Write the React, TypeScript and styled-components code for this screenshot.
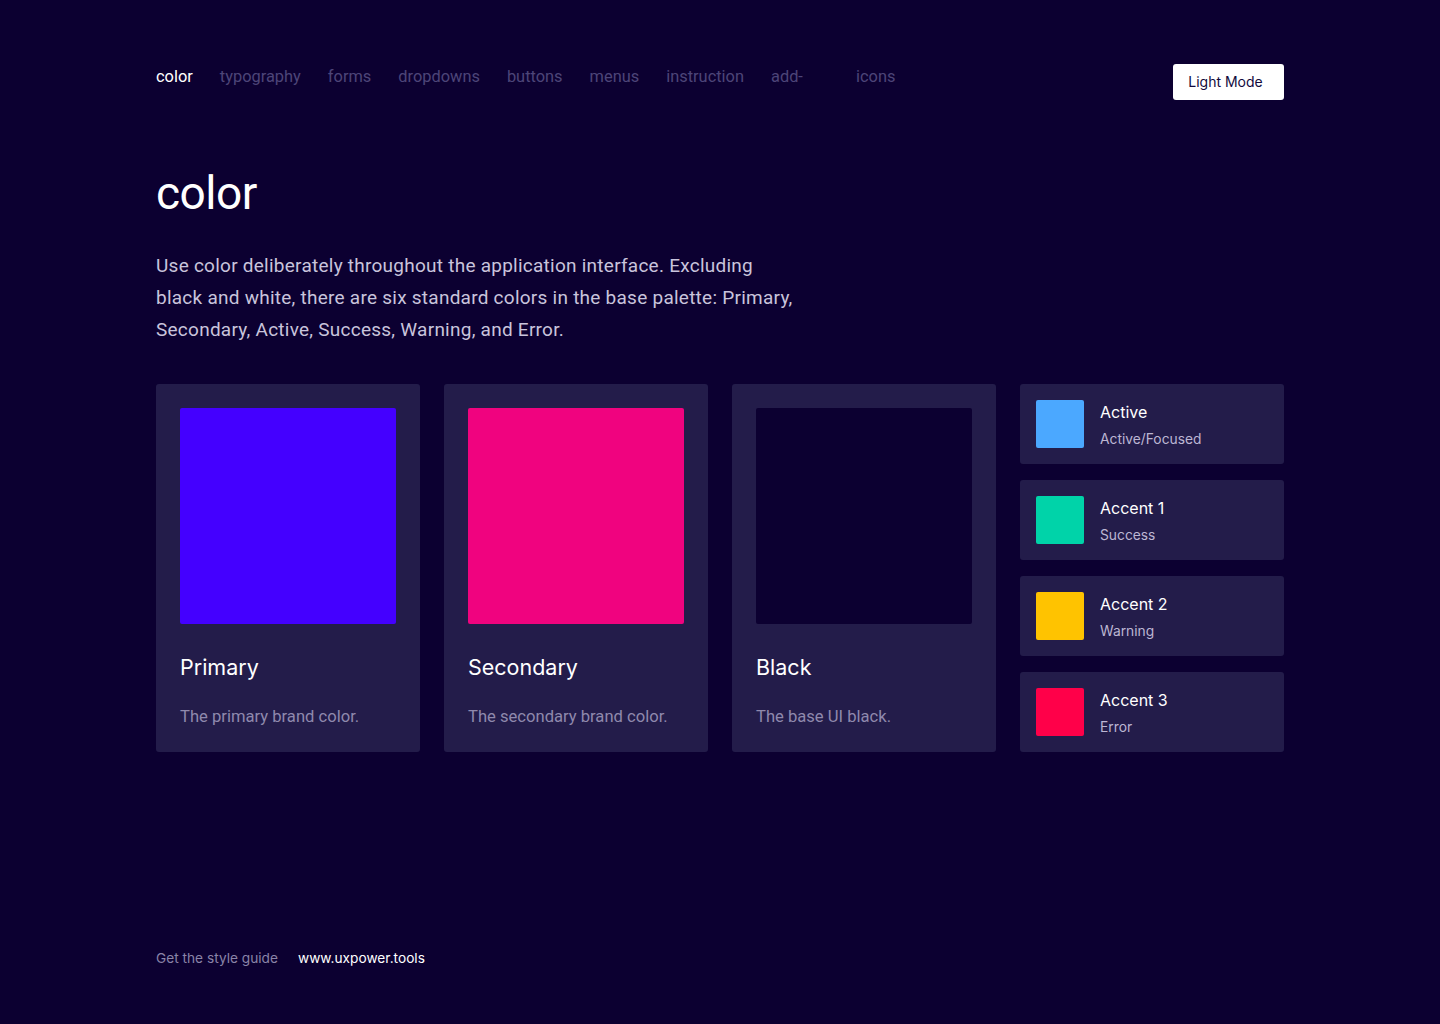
import React from "react";
import styled, { createGlobalStyle } from "styled-components";

const Global = createGlobalStyle`
  html, body { margin: 0; padding: 0; background: #0c0031; }
  body { font-family: Roboto, "Liberation Sans", sans-serif; -webkit-font-smoothing: antialiased; }
  * { box-sizing: border-box; }
`;

const Page = styled.div`
  width: 1440px;
  min-height: 1024px;
  background: #0c0031;
  padding: 64px 156px 0;
  display: flex;
  flex-direction: column;
`;

const TopBar = styled.header`
  display: flex;
  justify-content: space-between;
  align-items: flex-start;
  height: 36px;
`;

const Nav = styled.nav`
  display: flex;
  align-items: center;
  height: 24px;
  margin-top: 1px;
`;

const NavItem = styled.a<{ $active?: boolean; $w?: number }>`
  font-family: Roboto, "Liberation Sans", sans-serif;
  font-size: 16.4px;
  line-height: 24px;
  color: ${(p) => (p.$active ? "#ffffff" : "#4d4578")};
  text-decoration: none;
  margin-right: 27px;
  ${(p) => (p.$w ? `width: ${p.$w}px;` : "")}
  white-space: nowrap;
`;

const ModeButton = styled.button`
  width: 111px;
  height: 36px;
  background: #ffffff;
  border: none;
  border-radius: 3px;
  color: #120a3d;
  font-family: Inter, "Liberation Sans", sans-serif;
  font-size: 14px;
  padding: 0 6px 2px 0;
  text-align: center;
`;

const Title = styled.h1`
  margin: 65px 0 0;
  font-family: Roboto, "Liberation Sans", sans-serif;
  font-weight: 400;
  font-size: 46px;
  line-height: 56px;
  color: #ffffff;
  letter-spacing: -0.5px;
`;

const Lead = styled.p`
  margin: 29px 0 0;
  width: 642px;
  font-family: Roboto, "Liberation Sans", sans-serif;
  font-size: 19px;
  letter-spacing: 0.25px;
  line-height: 32px;
  color: #c9c4dc;
`;

const Grid = styled.section`
  margin-top: 38px;
  display: grid;
  grid-template-columns: repeat(4, 264px);
  gap: 24px;
`;

const Card = styled.div`
  background: #231c4a;
  border-radius: 3px;
  padding: 24px 24px 0;
  height: 368px;
  display: flex;
  flex-direction: column;
`;

const BigSwatch = styled.div<{ $c: string }>`
  width: 216px;
  height: 216px;
  border-radius: 2px;
  background: ${(p) => p.$c};
`;

const CardTitle = styled.div`
  margin-top: 29px;
  font-family: Inter, "Liberation Sans", sans-serif;
  font-size: 21.5px;
  line-height: 28px;
  color: #ffffff;
`;

const CardDesc = styled.div`
  margin-top: 24px;
  font-family: Roboto, "Liberation Sans", sans-serif;
  font-size: 16.6px;
  line-height: 24px;
  color: #8f89ad;
`;

const Stack = styled.div`
  display: flex;
  flex-direction: column;
  gap: 16px;
`;

const SmallCard = styled.div`
  background: #231c4a;
  border-radius: 3px;
  height: 80px;
  padding: 16px;
  display: flex;
  align-items: center;
  gap: 16px;
`;

const SmallSwatch = styled.div<{ $c: string }>`
  width: 48px;
  height: 48px;
  border-radius: 2px;
  background: ${(p) => p.$c};
  flex: none;
`;

const SmallText = styled.div`
  display: flex;
  flex-direction: column;
  margin-top: 0;
`;

const SmallTitle = styled.div`
  font-family: Inter, "Liberation Sans", sans-serif;
  font-size: 16px;
  line-height: 20px;
  color: #ffffff;
`;

const SmallSub = styled.div`
  margin-top: 9px;
  font-family: Inter, "Liberation Sans", sans-serif;
  font-size: 13.8px;
  line-height: 16px;
  color: #bcb6d3;
`;

const Footer = styled.footer`
  margin-top: 196px;
  display: flex;
  gap: 20px;
  font-family: Inter, "Liberation Sans", sans-serif;
  font-size: 13.7px;
  line-height: 20px;
`;

const FooterLabel = styled.span`
  color: #8a84a8;
`;

const FooterLink = styled.a`
  color: #ffffff;
  text-decoration: none;
`;

const navItems = [
  "color",
  "typography",
  "forms",
  "dropdowns",
  "buttons",
  "menus",
  "instruction",
  "add-",
  "icons",
];

const bigCards = [
  { name: "Primary", color: "#4400ff", desc: "The primary brand color." },
  { name: "Secondary", color: "#f0037f", desc: "The secondary brand color." },
  { name: "Black", color: "#0c0031", desc: "The base UI black." },
];

const smallCards = [
  { name: "Active", sub: "Active/Focused", color: "#4ba8ff" },
  { name: "Accent 1", sub: "Success", color: "#00d3a9" },
  { name: "Accent 2", sub: "Warning", color: "#ffc300" },
  { name: "Accent 3", sub: "Error", color: "#ff0049" },
];

export default function App() {
  return (
    <>
      <Global />
      <Page>
        <TopBar>
          <Nav>
            {navItems.map((n, i) => (
              <NavItem
                key={n}
                $active={i === 0}
                $w={n === "add-" ? 58 : undefined}
                href="#"
              >
                {n}
              </NavItem>
            ))}
          </Nav>
          <ModeButton>Light Mode</ModeButton>
        </TopBar>
        <Title>color</Title>
        <Lead>
          Use color deliberately throughout the application interface. Excluding
          black and white, there are six standard colors in the base palette:
          Primary, Secondary, Active, Success, Warning, and Error.
        </Lead>
        <Grid>
          {bigCards.map((c) => (
            <Card key={c.name}>
              <BigSwatch $c={c.color} />
              <CardTitle>{c.name}</CardTitle>
              <CardDesc>{c.desc}</CardDesc>
            </Card>
          ))}
          <Stack>
            {smallCards.map((c) => (
              <SmallCard key={c.name}>
                <SmallSwatch $c={c.color} />
                <SmallText>
                  <SmallTitle>{c.name}</SmallTitle>
                  <SmallSub>{c.sub}</SmallSub>
                </SmallText>
              </SmallCard>
            ))}
          </Stack>
        </Grid>
        <Footer>
          <FooterLabel>Get the style guide</FooterLabel>
          <FooterLink href="#">www.uxpower.tools</FooterLink>
        </Footer>
      </Page>
    </>
  );
}
